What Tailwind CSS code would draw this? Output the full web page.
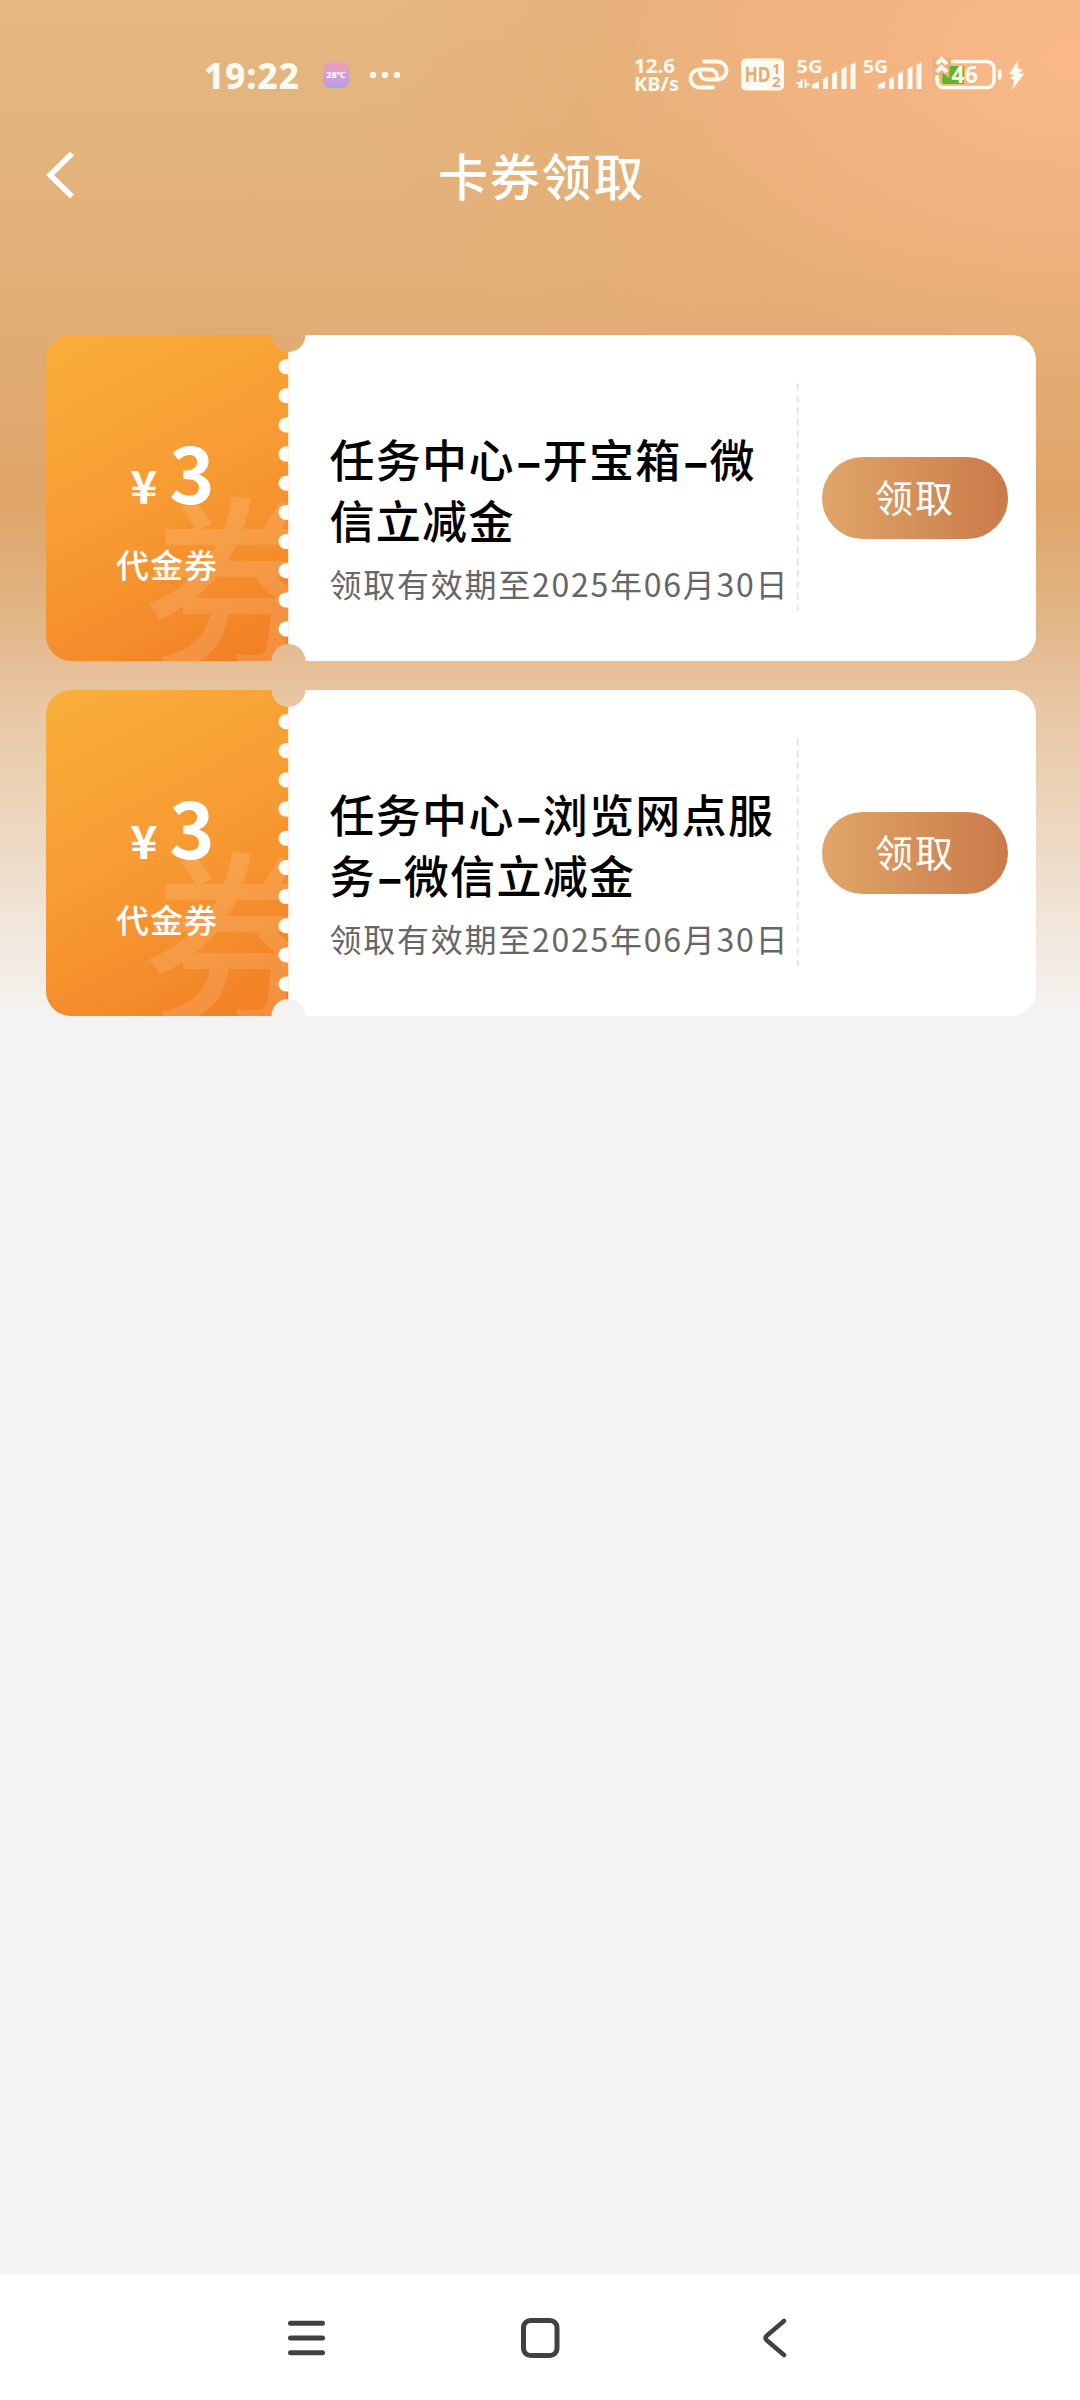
<!DOCTYPE html>
<html lang="zh-CN">
<head>
    <meta charset="UTF-8" />
    <meta name="viewport" content="width=device-width, initial-scale=1" />
    <title>卡券领取</title>
    <script src="https://cdn.jsdelivr.net/npm/@tailwindcss/browser@4"></script>
</head>
<body class="bg-[#f5f5f5] font-['Noto_Sans_CJK_SC',sans-serif]">
    <div class="w-[1080px] h-[2400px] flex flex-col overflow-hidden bg-no-repeat bg-[radial-gradient(ellipse_720px_430px_at_1080px_60px,#fab888_0%,#f4b381e0_35%,#e8ac7480_70%,#e2ad7200_100%),linear-gradient(180deg,#e5b882_0px,#e2b27a_200px,#e0ab72_380px,#dfa468_500px,#dfab74_545px,#e3b88a_630px,#e8c6a2_700px,#ecd6be_820px,#f1e5d9_920px,#f5f5f5_1030px)]">
        <!-- 状态栏 -->
        <div class="h-[130px] shrink-0 pt-[48px] pl-[204px] pr-[54px] flex items-start text-[#fffaf0]">
            <div class="h-[54px] flex items-center">
                <span class="text-[35px] leading-none font-extrabold tracking-[1px] w-[119px] whitespace-nowrap font-['Noto_Sans',sans-serif]">19:22</span>
                <span class="w-[26px] h-[26px] rounded-[7px] bg-linear-to-b from-[#f39cb4] to-[#b29fee] flex items-center justify-center text-[9px] font-bold text-white font-['Noto_Sans',sans-serif]">28℃</span>
                <svg class="ml-[20px]" width="32" height="8" viewBox="0 0 32 8" fill="currentColor"><circle cx="4" cy="4" r="3.2"/><circle cx="16" cy="4" r="3.2"/><circle cx="28" cy="4" r="3.2"/></svg>
            </div>
            <svg class="ml-auto" width="396" height="54" viewBox="630 48 396 54" fill="none">
                <g fill="#fffaf0" font-family="Noto Sans, sans-serif" font-weight="700">
                    <text x="634" y="72.500" font-size="19" textLength="41" lengthAdjust="spacingAndGlyphs">12.6</text>
                    <text x="634" y="91" font-size="19" textLength="45" lengthAdjust="spacingAndGlyphs">KB/s</text>
                    <text x="796.500" y="72.500" font-size="18.500" textLength="26" lengthAdjust="spacingAndGlyphs">5G</text>
                    <text x="863" y="72.500" font-size="18.500" textLength="25" lengthAdjust="spacingAndGlyphs">5G</text>
                </g>
                <!-- 链接 -->
                <g stroke="#fffaf0" stroke-width="3.800" stroke-linecap="round">
                    <path d="M704 61.500h13a9.500 9 0 0 1 0 18h-9c-5 0-8-3-8-6.500"/>
                    <path d="M713 87.500h-13a9.500 9 0 0 1 0-18h9c5 0 8 3 8 6.500"/>
                </g>
                <!-- HD -->
                <rect x="741" y="58.500" width="43" height="32" rx="5" fill="#fffaf0"/>
                <g fill="#e5ac75" font-family="Noto Sans, sans-serif" font-weight="700">
                    <text x="744.500" y="81.500" font-size="21" textLength="26" lengthAdjust="spacingAndGlyphs">HD</text>
                    <text x="772" y="74" font-size="15">1</text>
                    <text x="772" y="87" font-size="15">2</text>
                </g>
                <!-- 信号 -->
                <g fill="#fffaf0">
                    <path d="M812 88.500v-4l7-3v7zM823 89v-10l5-3v13zM832 89v-15l5-3v18zM841.500 89v-20l5-3v23zM850.500 89v-24l5-3v27z"/>
                    <path d="M878 88.500v-4l7-3v7zM889 89v-10l5-3v13zM898 89v-15l5-3v18zM907.500 89v-20l5-3v23zM916.500 89v-24l5-3v27z"/>
                </g>
                <path d="M796 83h3.500v5M801.500 79v9M805.500 79v9M810 84.500h-4" stroke="#fffaf0" stroke-width="2"/>
                <!-- 电池 -->
                <rect x="937" y="61.500" width="57" height="26" rx="7" stroke="#fffaf0" stroke-width="3.500"/>
                <path d="M933 57h18v20h-18z" fill="#eab07a"/>
                <path d="M950 66h14v18h-19q-3 0-3-4l1-7 6 5z" fill="#62b422"/>
                <path d="M936.500 64l5-5 5.500 5M936.500 72l5-5 5.500 5" stroke="#fffaf0" stroke-width="4"/>
                <path d="M937 75v6" stroke="#fffaf0" stroke-width="3.500"/>
                <path d="M998 69.500h1.500a2 2 0 0 1 2 2v6a2 2 0 0 1-2 2h-1.500z" fill="#fffaf0"/>
                <text x="951.500" y="83" font-size="23" font-weight="700" font-family="Noto Sans, sans-serif" fill="#fffaf0">46</text>
                <path d="M1018 60l-9 14 5 1-4 3 4 2-2 10 12-16-5-1 4-3-5-2z" fill="#fffaf0"/>
            </svg>
        </div>

        <!-- 标题栏 -->
        <header class="h-[205px] shrink-0 relative flex justify-center items-start">
            <svg class="absolute left-[44px] top-[20px]" width="32" height="50" viewBox="0 0 32 50" fill="none" stroke="#fff" stroke-width="5.500"><path d="M28 3.500L6 25l22 21.500"/></svg>
            <h1 class="mt-[9px] ml-[3px] text-[50px] leading-[70px] font-medium tracking-[1.7px] text-white">卡券领取</h1>
        </header>

        <!-- 卡券列表 -->
        <main id="coupons" class="flex-1 flex flex-col gap-[29px] pl-[46px] pr-[44px]"></main>

        <!-- 导航栏 -->
        <nav class="h-[125px] shrink-0 pt-[43px] pl-[285px] pr-[292px] bg-white flex justify-between items-start text-[#414141]">
            <svg width="43" height="40" viewBox="0 0 43 40" fill="none" stroke="currentColor" stroke-width="5" stroke-linecap="round"><path d="M5.500 5.300h32M5.500 20h32M5.500 34.700h32"/></svg>
            <svg class="-ml-[7px]" width="40" height="40" viewBox="0 0 40 40" fill="none" stroke="currentColor" stroke-width="5"><rect x="3.500" y="2.500" width="33.500" height="35" rx="7"/></svg>
            <svg width="30" height="40" viewBox="0 0 30 40" fill="none" stroke="currentColor" stroke-width="4.500" stroke-linecap="round" stroke-linejoin="round"><path d="M26 3L9 17.500q-3 2.500 0 5L26 37"/></svg>
        </nav>
    </div>

    <template id="coupon-template">
        <article class="h-[326px] flex relative">
            <svg class="absolute inset-0" width="990" height="326" viewBox="0 0 990 326">
                <defs>
                    <linearGradient id="ticket" x1="20" y1="0" x2="200" y2="340" gradientUnits="userSpaceOnUse">
                        <stop offset="0" stop-color="#f9ae3a"/>
                        <stop offset="0.5" stop-color="#f79a33"/>
                        <stop offset="1" stop-color="#f27f24"/>
                    </linearGradient>
                    <clipPath id="stub"><path d="M25 0H225.500A17 17 0 0 0 242.500 17V309A17 17 0 0 0 225.500 326H25A25 25 0 0 1 0 301V25A25 25 0 0 1 25 0z"/></clipPath>
                </defs>
                <path d="M242 17A17 17 0 0 0 259.500 0H965A25 25 0 0 1 990 25V301A25 25 0 0 1 965 326H259.500A17 17 0 0 0 242 309z" fill="#fff"/>
                <g clip-path="url(#stub)">
                    <rect width="242.500" height="326" fill="url(#ticket)"/>
                    <text x="97" y="321" font-size="188" font-weight="500" fill="#fff" fill-opacity="0.12">券</text>
                    <path d="M240 31.700H246" stroke="#fff" stroke-width="15" stroke-linecap="round"/>
                    <path d="M240 60.800H246" stroke="#fff" stroke-width="15" stroke-linecap="round"/>
                    <path d="M240 90H246" stroke="#fff" stroke-width="15" stroke-linecap="round"/>
                    <path d="M240 119.100H246" stroke="#fff" stroke-width="15" stroke-linecap="round"/>
                    <path d="M240 148.300H246" stroke="#fff" stroke-width="15" stroke-linecap="round"/>
                    <path d="M240 177.400H246" stroke="#fff" stroke-width="15" stroke-linecap="round"/>
                    <path d="M240 206.600H246" stroke="#fff" stroke-width="15" stroke-linecap="round"/>
                    <path d="M240 235.700H246" stroke="#fff" stroke-width="15" stroke-linecap="round"/>
                    <path d="M240 264.900H246" stroke="#fff" stroke-width="15" stroke-linecap="round"/>
                    <path d="M240 294H246" stroke="#fff" stroke-width="15" stroke-linecap="round"/>
                </g>
                <path d="M751.800 48.500V276" stroke="#e9e9e9" stroke-width="2.500" stroke-dasharray="7 4.650"/>
            </svg>
            <div class="relative w-[242px] pt-[86px] flex flex-col items-center text-white">
                <p class="flex items-baseline gap-[12px] leading-[100px] h-[100px] pl-[11px]">
                    <span class="text-[46px] font-bold">¥</span>
                    <span class="text-[77px] font-bold">3</span>
                </p>
                <p class="mt-[18px] text-[33px] leading-[50px] tracking-[1px] font-medium">代金券</p>
            </div>
            <div class="relative w-[510px] pl-[41.5px] pt-[93px]">
                <h2 class="text-[45px] leading-[61px] tracking-[1.300px] font-medium text-black"></h2>
                <p class="mt-[8px] text-[32px] leading-[50px] tracking-[1.750px] text-[#666] whitespace-nowrap"></p>
            </div>
            <div class="relative flex-1 pt-[122px] pl-[24px]">
                <button class="w-[186px] h-[82px] pb-[4px] rounded-full bg-linear-to-r from-[#e0a669] to-[#ca7a49] text-white text-[38px] leading-none tracking-[2px]">领取</button>
            </div>
        </article>
    </template>

    <script>
        const coupons = [
            { lines: ['任务中心-开宝箱-微', '信立减金'], expires: '2025年06月30日' },
            { lines: ['任务中心-浏览网点服', '务-微信立减金'], expires: '2025年06月30日' },
        ];
        const template = document.getElementById('coupon-template');
        coupons.forEach((coupon) => {
            const card = template.content.cloneNode(true);
            card.querySelector('h2').innerHTML = coupon.lines
                .map((line) => `<span class="block whitespace-nowrap">${line.replaceAll('-', '<span class="inline-block w-[28px] tracking-normal font-bold text-center scale-x-[1.7]">-</span>')}</span>`)
                .join('');
            card.querySelector('h2 + p').textContent = '领取有效期至' + coupon.expires;
            document.getElementById('coupons').appendChild(card);
        });
    </script>
</body>
</html>
